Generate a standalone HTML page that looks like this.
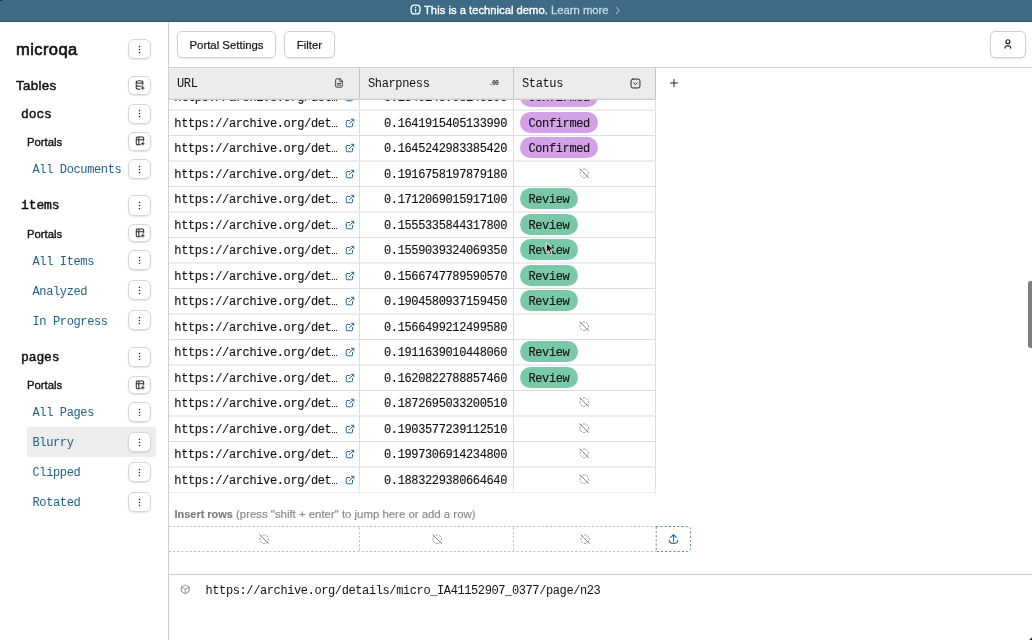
<!DOCTYPE html>
<html><head><meta charset="utf-8"><title>microqa</title>
<style>
*{box-sizing:border-box;margin:0;padding:0}
html,body{width:1032px;height:640px;overflow:hidden;background:#fff}
body{position:relative;font-family:"Liberation Sans",sans-serif;color:#111;font-size:11px}
.mono{font-family:"Liberation Mono",monospace}
#banner{position:absolute;left:0;top:0;width:1032px;height:22px;background:linear-gradient(#3d6b86 0 21px,#265a78 21px 22px);color:#fff;font-size:11.250px;line-height:20px;-webkit-text-stroke:.35px #fff}
#banner span{position:absolute;top:0;white-space:nowrap}
#banner svg{position:absolute;fill:none;stroke:#fff;stroke-width:2;stroke-linecap:round;stroke-linejoin:round}
#side{position:absolute;left:0;top:22px;width:169px;height:618px;border-right:1px solid #cfcfcf}
.si{position:absolute;white-space:nowrap;transform:translateY(-50%);line-height:1}
.bt{position:absolute;left:128px;width:23px;border:1px solid #d6d6d6;border-radius:6px;background:#fff;box-shadow:0 1px 1.5px rgba(0,0,0,.12)}
.ic{position:absolute;left:50%;top:50%;width:11px;height:11px;margin:-5.5px 0 0 -5.5px;fill:#222;stroke:#222;stroke-width:1.8;stroke-linecap:round;stroke-linejoin:round}
.ic2{position:absolute;left:50%;top:50%;width:12px;height:12px;margin:-6px 0 0 -6px;fill:none;stroke:#2a2a2a;stroke-width:1.020;stroke-linecap:round;stroke-linejoin:round}
.dots{position:absolute;left:50%;top:50%;width:3px;height:9px;margin:-4.5px 0 0 -1.5px;fill:#222}
.h1{left:16px;font-size:16.500px;-webkit-text-stroke:.62px #111;letter-spacing:.42px;margin-top:-.5px}
.h2{left:16px;font-size:13.300px;-webkit-text-stroke:.48px #111;letter-spacing:.32px;margin-top:.6px}
.tn{left:21px;font-family:"Liberation Mono",monospace;font-size:13px;-webkit-text-stroke:.45px #111;letter-spacing:-.1px;margin-top:.5px}
.pt{left:27px;font-size:11.300px;-webkit-text-stroke:.35px #111;margin-top:1.100px}
.ln{left:32.500px;font-family:"Liberation Mono",monospace;font-size:12px;letter-spacing:-.37px;color:#22628f;margin-top:1.900px}
#sel{position:absolute;left:27px;top:427px;width:129px;height:30px;background:#ededed;border-radius:3px}
#tool{position:absolute;left:169px;top:21px;width:863px;height:47px;border-bottom:1px solid #cfcfcf}
.tb{position:absolute;top:10px;height:26.500px;border:1px solid #d0d0d0;border-radius:5px;font-size:11.4px;line-height:26px;text-align:center;background:#fff;box-shadow:0 1px 1.5px rgba(0,0,0,.10);-webkit-text-stroke:.2px #111}
#hdr{position:absolute;left:169px;top:68px;width:487px;height:32px;background:linear-gradient(#ececec 0 30px,#e2e2e2 30px 31px,#cacaca 31px 32px);z-index:3}
#hdr div{position:absolute;top:0;height:30px;line-height:33.500px;font-family:"Liberation Mono",monospace;font-size:12px;letter-spacing:-.37px;border-right:1px solid #c4c4c4;padding-left:8px}
#hdr svg{position:absolute;top:10px;width:10px;height:10px;fill:none;stroke:#222;stroke-width:2;stroke-linecap:round;stroke-linejoin:round}
#grid{position:absolute;left:169px;top:0;width:487px;height:501px;overflow:hidden;z-index:1}
.hl{position:absolute;height:1px}
.row{position:absolute;left:0;width:487px;height:25.5px;font-family:"Liberation Mono",monospace;font-size:12px;letter-spacing:-.37px;line-height:29px;white-space:nowrap;-webkit-text-stroke:.12px #111}
.row>div{position:absolute;top:0;height:25.500px;border-right:1px solid #dcdcdc}
.c1{left:0;width:191px;padding-left:5.3px}
.c2{left:191px;width:154px;text-align:right;padding-right:6px}
.c3{left:345px;width:142px}
.u i{display:inline-block;width:5px;height:1.400px;margin-left:.9px;background:linear-gradient(90deg,#222 0 1.200px,transparent 1.200px 1.800px,#222 1.800px 3px,transparent 3px 3.600px,#222 3.600px 4.800px,transparent 4.800px)}
.lk{position:absolute;left:176.200px;top:8px;width:10px;height:10px;fill:none;stroke:#2a6899;stroke-width:2.400;stroke-linecap:round;stroke-linejoin:round}
.nul{position:absolute;width:10.400px;height:10.400px;fill:none;stroke:#808080;stroke-width:2.200;stroke-linecap:round;stroke-linejoin:round}
.c3 .nul{left:65.2px;top:6.800px}
.dc .nul{left:50%;top:7.5px;margin-left:-5px}
.tag{position:absolute;left:6px;top:1.6px;height:21.500px;line-height:25.500px;border-radius:10.750px;padding:0 8.600px 0 8.400px}
.tag.c{background:#d4a1e8}
.tag.r{background:#79c9a8}
#fade{position:absolute;left:169px;top:485px;width:500px;height:17px;background:linear-gradient(rgba(255,255,255,0),rgba(255,255,255,.6) 45%,#fff 85%);z-index:2}
#ins{position:absolute;left:174.500px;top:508px;font-size:11.400px;color:#868686;-webkit-text-stroke:.15px #868686;white-space:nowrap;line-height:13px}
#ins b{color:#7a7a7a;font-size:10.950px}
.dh{position:absolute;height:1px;background:repeating-linear-gradient(90deg,#b4b4b4 0 2.100px,transparent 2.100px 4.200px)}
.dv{position:absolute;width:1px;background:repeating-linear-gradient(180deg,#b4b4b4 0 2.100px,transparent 2.100px 4.200px)}
#bot{position:absolute;left:169px;top:574px;width:863px;height:66px;border-top:1px solid #cfcfcf}
#thumb{position:absolute;left:1028px;top:281px;width:5px;height:67px;background:#7f7f7f;border-radius:2.5px 0 0 2.5px;z-index:9}
#wrap{position:absolute;left:0;top:0;width:1032px;height:640px;will-change:transform}
</style></head><body><div id="wrap">
<div id="banner"><i style="position:absolute;left:0;top:0;width:1.500px;height:1px;background:#1a2340"></i>
<svg style="left:409.500px;top:4.250px;width:11px;height:11px" viewBox="0 0 11 11"><rect x="1.130" y="1.130" width="8.850" height="8.850" rx="3" stroke-width="1.250"/><path d="M5.600 5.100v2.700M5.600 3.400v.01" stroke-width="1.150"/></svg>
<span style="left:424px">This is a technical demo.</span><span style="left:551px;color:#c9dde9;-webkit-text-stroke:.3px #c9dde9">Learn more</span>
<svg style="left:613px;top:6px;width:9px;height:9px" viewBox="0 0 24 24"><path d="M9 4l8 8-8 8" stroke="#c9dde9" stroke-width="2.400"/></svg>
</div>
<div id="side">
</div>
<div id="sel"></div>
<div class="si h1" style="top:49.5px">microqa</div><div class="bt" style="top:39.3px;height:20.2px"><svg class="dots" viewBox="0 0 3 9"><circle cx="1.5" cy="1.4" r=".75"/><circle cx="1.5" cy="4.5" r=".75"/><circle cx="1.5" cy="7.6" r=".75"/></svg></div>
<div class="si h2" style="top:85.5px">Tables</div><div class="bt" style="top:76.4px;height:18.2px"><svg class="ic2" viewBox="0 0 12 12"><ellipse cx="5.500" cy="3" rx="3.300" ry="1.300"/><path d="M2.200 3V8.900c0 .7 1.400 1.300 3.300 1.300h.4M2.200 5.950c0 .7 1.400 1.300 3.300 1.300.6 0 1.200-.05 1.700-.15M8.800 3V6M7.300 8.900h2.800M8.700 7.500v2.800"/></svg></div>
<div class="si tn" style="top:113.5px">docs</div><div class="bt" style="top:103.7px;height:20.2px"><svg class="dots" viewBox="0 0 3 9"><circle cx="1.5" cy="1.4" r=".75"/><circle cx="1.5" cy="4.5" r=".75"/><circle cx="1.5" cy="7.6" r=".75"/></svg></div>
<div class="si pt" style="top:142px">Portals</div><div class="bt" style="top:132.4px;height:18.2px"><svg class="ic2" viewBox="0 0 12 12"><path d="M6.500 9.700H3.450a1.200 1.200 0 0 1-1.200-1.200V3.100a1.200 1.200 0 0 1 1.200-1.200h5.050a1.200 1.200 0 0 1 1.200 1.200V6M2.250 4.800H9.700M4.800 1.900V9.700M7.400 8.700h2.800M8.800 7.300v2.800"/></svg></div>
<div class="si ln" style="top:168.5px">All Documents</div><div class="bt" style="top:159.0px;height:20.2px"><svg class="dots" viewBox="0 0 3 9"><circle cx="1.5" cy="1.4" r=".75"/><circle cx="1.5" cy="4.5" r=".75"/><circle cx="1.5" cy="7.6" r=".75"/></svg></div>
<div class="si tn" style="top:204.4px">items</div><div class="bt" style="top:195.4px;height:20.2px"><svg class="dots" viewBox="0 0 3 9"><circle cx="1.5" cy="1.4" r=".75"/><circle cx="1.5" cy="4.5" r=".75"/><circle cx="1.5" cy="7.6" r=".75"/></svg></div>
<div class="si pt" style="top:233.5px">Portals</div><div class="bt" style="top:224.1px;height:18.2px"><svg class="ic2" viewBox="0 0 12 12"><path d="M6.500 9.700H3.450a1.200 1.200 0 0 1-1.200-1.200V3.100a1.200 1.200 0 0 1 1.200-1.200h5.050a1.200 1.200 0 0 1 1.200 1.200V6M2.250 4.800H9.700M4.800 1.900V9.700M7.400 8.700h2.800M8.800 7.300v2.800"/></svg></div>
<div class="si ln" style="top:260px">All Items</div><div class="bt" style="top:250.3px;height:20.2px"><svg class="dots" viewBox="0 0 3 9"><circle cx="1.5" cy="1.4" r=".75"/><circle cx="1.5" cy="4.5" r=".75"/><circle cx="1.5" cy="7.6" r=".75"/></svg></div>
<div class="si ln" style="top:290px">Analyzed</div><div class="bt" style="top:280.3px;height:20.2px"><svg class="dots" viewBox="0 0 3 9"><circle cx="1.5" cy="1.4" r=".75"/><circle cx="1.5" cy="4.5" r=".75"/><circle cx="1.5" cy="7.6" r=".75"/></svg></div>
<div class="si ln" style="top:320px">In Progress</div><div class="bt" style="top:310.3px;height:20.2px"><svg class="dots" viewBox="0 0 3 9"><circle cx="1.5" cy="1.4" r=".75"/><circle cx="1.5" cy="4.5" r=".75"/><circle cx="1.5" cy="7.6" r=".75"/></svg></div>
<div class="si tn" style="top:356.5px">pages</div><div class="bt" style="top:346.75px;height:20.2px"><svg class="dots" viewBox="0 0 3 9"><circle cx="1.5" cy="1.4" r=".75"/><circle cx="1.5" cy="4.5" r=".75"/><circle cx="1.5" cy="7.6" r=".75"/></svg></div>
<div class="si pt" style="top:385px">Portals</div><div class="bt" style="top:375.7px;height:18.2px"><svg class="ic2" viewBox="0 0 12 12"><path d="M6.500 9.700H3.450a1.200 1.200 0 0 1-1.200-1.200V3.100a1.200 1.200 0 0 1 1.200-1.200h5.050a1.200 1.200 0 0 1 1.200 1.200V6M2.250 4.800H9.700M4.800 1.900V9.700M7.400 8.700h2.800M8.800 7.300v2.800"/></svg></div>
<div class="si ln" style="top:411.5px">All Pages</div><div class="bt" style="top:402.25px;height:20.2px"><svg class="dots" viewBox="0 0 3 9"><circle cx="1.5" cy="1.4" r=".75"/><circle cx="1.5" cy="4.5" r=".75"/><circle cx="1.5" cy="7.6" r=".75"/></svg></div>
<div class="si ln" style="top:441.5px">Blurry</div><div class="bt" style="top:432.25px;height:20.2px"><svg class="dots" viewBox="0 0 3 9"><circle cx="1.5" cy="1.4" r=".75"/><circle cx="1.5" cy="4.5" r=".75"/><circle cx="1.5" cy="7.6" r=".75"/></svg></div>
<div class="si ln" style="top:471.5px">Clipped</div><div class="bt" style="top:462.25px;height:20.2px"><svg class="dots" viewBox="0 0 3 9"><circle cx="1.5" cy="1.4" r=".75"/><circle cx="1.5" cy="4.5" r=".75"/><circle cx="1.5" cy="7.6" r=".75"/></svg></div>
<div class="si ln" style="top:501.5px">Rotated</div><div class="bt" style="top:492.25px;height:20.2px"><svg class="dots" viewBox="0 0 3 9"><circle cx="1.5" cy="1.4" r=".75"/><circle cx="1.5" cy="4.5" r=".75"/><circle cx="1.5" cy="7.6" r=".75"/></svg></div>
<div id="tool">
<div class="tb" style="left:8px;width:99px">Portal Settings</div>
<div class="tb" style="left:115px;width:51px">Filter</div>
<div class="tb" style="left:821px;width:36px"><svg style="position:absolute;left:11px;top:6px;width:12px;height:12px;fill:none;stroke:#222;stroke-width:1.200;stroke-linecap:round" viewBox="0 0 12 12"><circle cx="5.900" cy="3.700" r="1.950"/><path d="M3.100 10.100V9.850a2 2 0 0 1 2-2h1.550a2 2 0 0 1 2 2v.25"/></svg></div>
</div>
<div id="grid">
<div class="hl" style="top:84px;left:0px;width:487px;background:rgb(222,222,222)"></div>
<div class="row" style="top:84px"><div class="c1"><span class="u">https://archive.org/det<i></i></span><svg class="lk" viewBox="0 0 24 24"><path d="M15 3h6v6M10 14 21 3M18 13v6a2 2 0 0 1-2 2H5a2 2 0 0 1-2-2V8a2 2 0 0 1 2-2h6"/></svg></div><div class="c2">0.1349145708148390</div><div class="c3"><span class="tag c">Confirmed</span></div></div>
<div class="hl" style="top:109px;left:0px;width:487px;background:rgb(238,238,238)"></div><div class="hl" style="top:110px;left:0px;width:487px;background:rgb(238,238,238)"></div>
<div class="row" style="top:110px"><div class="c1"><span class="u">https://archive.org/det<i></i></span><svg class="lk" viewBox="0 0 24 24"><path d="M15 3h6v6M10 14 21 3M18 13v6a2 2 0 0 1-2 2H5a2 2 0 0 1-2-2V8a2 2 0 0 1 2-2h6"/></svg></div><div class="c2">0.1641915405133990</div><div class="c3"><span class="tag c">Confirmed</span></div></div>
<div class="hl" style="top:135px;left:0px;width:487px;background:rgb(222,222,222)"></div>
<div class="row" style="top:135px"><div class="c1"><span class="u">https://archive.org/det<i></i></span><svg class="lk" viewBox="0 0 24 24"><path d="M15 3h6v6M10 14 21 3M18 13v6a2 2 0 0 1-2 2H5a2 2 0 0 1-2-2V8a2 2 0 0 1 2-2h6"/></svg></div><div class="c2">0.1645242983385420</div><div class="c3"><span class="tag c">Confirmed</span></div></div>
<div class="hl" style="top:160px;left:0px;width:487px;background:rgb(238,238,238)"></div><div class="hl" style="top:161px;left:0px;width:487px;background:rgb(238,238,238)"></div>
<div class="row" style="top:161px"><div class="c1"><span class="u">https://archive.org/det<i></i></span><svg class="lk" viewBox="0 0 24 24"><path d="M15 3h6v6M10 14 21 3M18 13v6a2 2 0 0 1-2 2H5a2 2 0 0 1-2-2V8a2 2 0 0 1 2-2h6"/></svg></div><div class="c2">0.1916758197879180</div><div class="c3"><svg class="nul" viewBox="0 0 24 24"><path stroke="#9c9c9c" d="M10.1 2.18a9.93 9.93 0 0 1 3.8 0M17.6 3.71a9.95 9.95 0 0 1 2.69 2.7M21.82 10.1a9.93 9.93 0 0 1 0 3.8M20.29 17.6a9.95 9.95 0 0 1-2.7 2.69M13.9 21.82a9.94 9.94 0 0 1-3.8 0M6.4 20.29a9.95 9.95 0 0 1-2.69-2.7M2.18 13.9a9.93 9.93 0 0 1 0-3.8M3.71 6.4a9.95 9.95 0 0 1 2.7-2.69"/><path d="M2 2l20 20"/></svg></div></div>
<div class="hl" style="top:186px;left:0px;width:487px;background:rgb(222,222,222)"></div>
<div class="row" style="top:186px"><div class="c1"><span class="u">https://archive.org/det<i></i></span><svg class="lk" viewBox="0 0 24 24"><path d="M15 3h6v6M10 14 21 3M18 13v6a2 2 0 0 1-2 2H5a2 2 0 0 1-2-2V8a2 2 0 0 1 2-2h6"/></svg></div><div class="c2">0.1712069015917100</div><div class="c3"><span class="tag r">Review</span></div></div>
<div class="hl" style="top:211px;left:0px;width:487px;background:rgb(238,238,238)"></div><div class="hl" style="top:212px;left:0px;width:487px;background:rgb(238,238,238)"></div>
<div class="row" style="top:212px"><div class="c1"><span class="u">https://archive.org/det<i></i></span><svg class="lk" viewBox="0 0 24 24"><path d="M15 3h6v6M10 14 21 3M18 13v6a2 2 0 0 1-2 2H5a2 2 0 0 1-2-2V8a2 2 0 0 1 2-2h6"/></svg></div><div class="c2">0.1555335844317800</div><div class="c3"><span class="tag r">Review</span></div></div>
<div class="hl" style="top:237px;left:0px;width:487px;background:rgb(222,222,222)"></div>
<div class="row" style="top:237px"><div class="c1"><span class="u">https://archive.org/det<i></i></span><svg class="lk" viewBox="0 0 24 24"><path d="M15 3h6v6M10 14 21 3M18 13v6a2 2 0 0 1-2 2H5a2 2 0 0 1-2-2V8a2 2 0 0 1 2-2h6"/></svg></div><div class="c2">0.1559039324069350</div><div class="c3"><span class="tag r">Review</span></div></div>
<div class="hl" style="top:262px;left:0px;width:487px;background:rgb(238,238,238)"></div><div class="hl" style="top:263px;left:0px;width:487px;background:rgb(238,238,238)"></div>
<div class="row" style="top:263px"><div class="c1"><span class="u">https://archive.org/det<i></i></span><svg class="lk" viewBox="0 0 24 24"><path d="M15 3h6v6M10 14 21 3M18 13v6a2 2 0 0 1-2 2H5a2 2 0 0 1-2-2V8a2 2 0 0 1 2-2h6"/></svg></div><div class="c2">0.1566747789590570</div><div class="c3"><span class="tag r">Review</span></div></div>
<div class="hl" style="top:288px;left:0px;width:487px;background:rgb(222,222,222)"></div>
<div class="row" style="top:288px"><div class="c1"><span class="u">https://archive.org/det<i></i></span><svg class="lk" viewBox="0 0 24 24"><path d="M15 3h6v6M10 14 21 3M18 13v6a2 2 0 0 1-2 2H5a2 2 0 0 1-2-2V8a2 2 0 0 1 2-2h6"/></svg></div><div class="c2">0.1904580937159450</div><div class="c3"><span class="tag r">Review</span></div></div>
<div class="hl" style="top:313px;left:0px;width:487px;background:rgb(238,238,238)"></div><div class="hl" style="top:314px;left:0px;width:487px;background:rgb(238,238,238)"></div>
<div class="row" style="top:314px"><div class="c1"><span class="u">https://archive.org/det<i></i></span><svg class="lk" viewBox="0 0 24 24"><path d="M15 3h6v6M10 14 21 3M18 13v6a2 2 0 0 1-2 2H5a2 2 0 0 1-2-2V8a2 2 0 0 1 2-2h6"/></svg></div><div class="c2">0.1566499212499580</div><div class="c3"><svg class="nul" viewBox="0 0 24 24"><path stroke="#9c9c9c" d="M10.1 2.18a9.93 9.93 0 0 1 3.8 0M17.6 3.71a9.95 9.95 0 0 1 2.69 2.7M21.82 10.1a9.93 9.93 0 0 1 0 3.8M20.29 17.6a9.95 9.95 0 0 1-2.7 2.69M13.9 21.82a9.94 9.94 0 0 1-3.8 0M6.4 20.29a9.95 9.95 0 0 1-2.69-2.7M2.18 13.9a9.93 9.93 0 0 1 0-3.8M3.71 6.4a9.95 9.95 0 0 1 2.7-2.69"/><path d="M2 2l20 20"/></svg></div></div>
<div class="hl" style="top:339px;left:0px;width:487px;background:rgb(222,222,222)"></div>
<div class="row" style="top:339px"><div class="c1"><span class="u">https://archive.org/det<i></i></span><svg class="lk" viewBox="0 0 24 24"><path d="M15 3h6v6M10 14 21 3M18 13v6a2 2 0 0 1-2 2H5a2 2 0 0 1-2-2V8a2 2 0 0 1 2-2h6"/></svg></div><div class="c2">0.1911639010448060</div><div class="c3"><span class="tag r">Review</span></div></div>
<div class="hl" style="top:364px;left:0px;width:487px;background:rgb(238,238,238)"></div><div class="hl" style="top:365px;left:0px;width:487px;background:rgb(238,238,238)"></div>
<div class="row" style="top:365px"><div class="c1"><span class="u">https://archive.org/det<i></i></span><svg class="lk" viewBox="0 0 24 24"><path d="M15 3h6v6M10 14 21 3M18 13v6a2 2 0 0 1-2 2H5a2 2 0 0 1-2-2V8a2 2 0 0 1 2-2h6"/></svg></div><div class="c2">0.1620822788857460</div><div class="c3"><span class="tag r">Review</span></div></div>
<div class="hl" style="top:390px;left:0px;width:487px;background:rgb(222,222,222)"></div>
<div class="row" style="top:390px"><div class="c1"><span class="u">https://archive.org/det<i></i></span><svg class="lk" viewBox="0 0 24 24"><path d="M15 3h6v6M10 14 21 3M18 13v6a2 2 0 0 1-2 2H5a2 2 0 0 1-2-2V8a2 2 0 0 1 2-2h6"/></svg></div><div class="c2">0.1872695033200510</div><div class="c3"><svg class="nul" viewBox="0 0 24 24"><path stroke="#9c9c9c" d="M10.1 2.18a9.93 9.93 0 0 1 3.8 0M17.6 3.71a9.95 9.95 0 0 1 2.69 2.7M21.82 10.1a9.93 9.93 0 0 1 0 3.8M20.29 17.6a9.95 9.95 0 0 1-2.7 2.69M13.9 21.82a9.94 9.94 0 0 1-3.8 0M6.4 20.29a9.95 9.95 0 0 1-2.69-2.7M2.18 13.9a9.93 9.93 0 0 1 0-3.8M3.71 6.4a9.95 9.95 0 0 1 2.7-2.69"/><path d="M2 2l20 20"/></svg></div></div>
<div class="hl" style="top:415px;left:0px;width:487px;background:rgb(238,238,238)"></div><div class="hl" style="top:416px;left:0px;width:487px;background:rgb(238,238,238)"></div>
<div class="row" style="top:416px"><div class="c1"><span class="u">https://archive.org/det<i></i></span><svg class="lk" viewBox="0 0 24 24"><path d="M15 3h6v6M10 14 21 3M18 13v6a2 2 0 0 1-2 2H5a2 2 0 0 1-2-2V8a2 2 0 0 1 2-2h6"/></svg></div><div class="c2">0.1903577239112510</div><div class="c3"><svg class="nul" viewBox="0 0 24 24"><path stroke="#9c9c9c" d="M10.1 2.18a9.93 9.93 0 0 1 3.8 0M17.6 3.71a9.95 9.95 0 0 1 2.69 2.7M21.82 10.1a9.93 9.93 0 0 1 0 3.8M20.29 17.6a9.95 9.95 0 0 1-2.7 2.69M13.9 21.82a9.94 9.94 0 0 1-3.8 0M6.4 20.29a9.95 9.95 0 0 1-2.69-2.7M2.18 13.9a9.93 9.93 0 0 1 0-3.8M3.71 6.4a9.95 9.95 0 0 1 2.7-2.69"/><path d="M2 2l20 20"/></svg></div></div>
<div class="hl" style="top:441px;left:0px;width:487px;background:rgb(222,222,222)"></div>
<div class="row" style="top:441px"><div class="c1"><span class="u">https://archive.org/det<i></i></span><svg class="lk" viewBox="0 0 24 24"><path d="M15 3h6v6M10 14 21 3M18 13v6a2 2 0 0 1-2 2H5a2 2 0 0 1-2-2V8a2 2 0 0 1 2-2h6"/></svg></div><div class="c2">0.1997306914234800</div><div class="c3"><svg class="nul" viewBox="0 0 24 24"><path stroke="#9c9c9c" d="M10.1 2.18a9.93 9.93 0 0 1 3.8 0M17.6 3.71a9.95 9.95 0 0 1 2.69 2.7M21.82 10.1a9.93 9.93 0 0 1 0 3.8M20.29 17.6a9.95 9.95 0 0 1-2.7 2.69M13.9 21.82a9.94 9.94 0 0 1-3.8 0M6.4 20.29a9.95 9.95 0 0 1-2.69-2.7M2.18 13.9a9.93 9.93 0 0 1 0-3.8M3.71 6.4a9.95 9.95 0 0 1 2.7-2.69"/><path d="M2 2l20 20"/></svg></div></div>
<div class="hl" style="top:466px;left:0px;width:487px;background:rgb(238,238,238)"></div><div class="hl" style="top:467px;left:0px;width:487px;background:rgb(238,238,238)"></div>
<div class="row" style="top:467px"><div class="c1"><span class="u">https://archive.org/det<i></i></span><svg class="lk" viewBox="0 0 24 24"><path d="M15 3h6v6M10 14 21 3M18 13v6a2 2 0 0 1-2 2H5a2 2 0 0 1-2-2V8a2 2 0 0 1 2-2h6"/></svg></div><div class="c2">0.1883229380664640</div><div class="c3"><svg class="nul" viewBox="0 0 24 24"><path stroke="#9c9c9c" d="M10.1 2.18a9.93 9.93 0 0 1 3.8 0M17.6 3.71a9.95 9.95 0 0 1 2.69 2.7M21.82 10.1a9.93 9.93 0 0 1 0 3.8M20.29 17.6a9.95 9.95 0 0 1-2.7 2.69M13.9 21.82a9.94 9.94 0 0 1-3.8 0M6.4 20.29a9.95 9.95 0 0 1-2.69-2.7M2.18 13.9a9.93 9.93 0 0 1 0-3.8M3.71 6.4a9.95 9.95 0 0 1 2.7-2.69"/><path d="M2 2l20 20"/></svg></div></div>
<div class="hl" style="top:492px;left:0px;width:487px;background:rgb(222,222,222)"></div>
<div class="row" style="top:492px"><div class="c1"><span class="u">https://archive.org/det<i></i></span><svg class="lk" viewBox="0 0 24 24"><path d="M15 3h6v6M10 14 21 3M18 13v6a2 2 0 0 1-2 2H5a2 2 0 0 1-2-2V8a2 2 0 0 1 2-2h6"/></svg></div><div class="c2">0.1700000000000000</div><div class="c3"><svg class="nul" viewBox="0 0 24 24"><path stroke="#9c9c9c" d="M10.1 2.18a9.93 9.93 0 0 1 3.8 0M17.6 3.71a9.95 9.95 0 0 1 2.69 2.7M21.82 10.1a9.93 9.93 0 0 1 0 3.8M20.29 17.6a9.95 9.95 0 0 1-2.7 2.69M13.9 21.82a9.94 9.94 0 0 1-3.8 0M6.4 20.29a9.95 9.95 0 0 1-2.69-2.7M2.18 13.9a9.93 9.93 0 0 1 0-3.8M3.71 6.4a9.95 9.95 0 0 1 2.7-2.69"/><path d="M2 2l20 20"/></svg></div></div>
</div>
<div id="hdr">
<div style="left:0;width:191px">URL<svg style="left:165px" viewBox="0 0 24 24"><path d="M14 2H6a2 2 0 0 0-2 2v16a2 2 0 0 0 2 2h12a2 2 0 0 0 2-2V8zM14 2v6h6M8 13h8M8 17h8"/></svg></div>
<div style="left:191px;width:154px">Sharpness<span style="position:absolute;left:129px;top:0;font-size:6.500px;font-weight:bold;letter-spacing:-.9px;color:#333;line-height:31px">.00</span></div>
<div style="left:345px;width:142px">Status<svg style="left:116px;top:9.700px;width:11px;height:11px;stroke-width:1" viewBox="0 0 11 11"><rect x="1.050" y="1.050" width="8.900" height="8.900" rx="1.800"/><path d="M3.700 4.800l1.800 1.800 1.800-1.800"/></svg></div>
</div>
<svg style="position:absolute;left:668.500px;top:78.100px;width:10px;height:10px" viewBox="0 0 24 24"><path d="M12 3.200v17.600M3.200 12h17.600" stroke="#222" stroke-width="2.300" stroke-linecap="round"/></svg>
<div id="fade"></div>
<div id="ins"><b>Insert rows</b> (press "shift + enter" to jump here or add a row)</div>
<svg style="position:absolute;left:169px;top:526px;width:487px;height:26px" viewBox="0 0 487 26" fill="none" stroke="#bcbcbc" stroke-width="1" stroke-dasharray="2.100 2.090"><path d="M-.2 .5H487M-.2 25.500H487M190.500 1.500V25M344.500 1.500V25"/></svg>
<svg class="nul" style="left:259px;top:533.800px" viewBox="0 0 24 24"><path stroke="#9c9c9c" d="M10.1 2.18a9.93 9.93 0 0 1 3.8 0M17.6 3.71a9.95 9.95 0 0 1 2.69 2.7M21.82 10.1a9.93 9.93 0 0 1 0 3.8M20.29 17.6a9.95 9.95 0 0 1-2.7 2.69M13.9 21.82a9.94 9.94 0 0 1-3.8 0M6.4 20.29a9.95 9.95 0 0 1-2.69-2.7M2.18 13.9a9.93 9.93 0 0 1 0-3.8M3.71 6.4a9.95 9.95 0 0 1 2.7-2.69"/><path d="M2 2l20 20"/></svg>
<svg class="nul" style="left:431.500px;top:533.800px" viewBox="0 0 24 24"><path stroke="#9c9c9c" d="M10.1 2.18a9.93 9.93 0 0 1 3.8 0M17.6 3.71a9.95 9.95 0 0 1 2.69 2.7M21.82 10.1a9.93 9.93 0 0 1 0 3.8M20.29 17.6a9.95 9.95 0 0 1-2.7 2.69M13.9 21.82a9.94 9.94 0 0 1-3.8 0M6.4 20.29a9.95 9.95 0 0 1-2.69-2.7M2.18 13.9a9.93 9.93 0 0 1 0-3.8M3.71 6.4a9.95 9.95 0 0 1 2.7-2.69"/><path d="M2 2l20 20"/></svg>
<svg class="nul" style="left:579.700px;top:533.800px" viewBox="0 0 24 24"><path stroke="#9c9c9c" d="M10.1 2.18a9.93 9.93 0 0 1 3.8 0M17.6 3.71a9.95 9.95 0 0 1 2.69 2.7M21.82 10.1a9.93 9.93 0 0 1 0 3.8M20.29 17.6a9.95 9.95 0 0 1-2.7 2.69M13.9 21.82a9.94 9.94 0 0 1-3.8 0M6.4 20.29a9.95 9.95 0 0 1-2.69-2.7M2.18 13.9a9.93 9.93 0 0 1 0-3.8M3.71 6.4a9.95 9.95 0 0 1 2.7-2.69"/><path d="M2 2l20 20"/></svg>
<svg style="position:absolute;left:655px;top:526px;width:37px;height:26px" viewBox="0 0 37 26"><path d="M1.200 .5H32.500a3 3 0 0 1 3 3v19a3 3 0 0 1-3 3H1.200z" fill="#fff" stroke="#6189ad" stroke-width="1" stroke-dasharray="2.100 2.100"/><path d="M18.500 15.300V9M15.700 11.400l2.800-2.800 2.800 2.800M14.300 14.300c.1 2.300 .9 3.100 4.200 3.100s4.100-.8 4.200-3.100" fill="none" stroke="#2f6a96" stroke-width="1.150" stroke-linecap="round" stroke-linejoin="round"/></svg>
<div id="bot">
<svg style="position:absolute;left:11px;top:9.100px;width:10.500px;height:10.500px;fill:none;stroke:#777;stroke-width:1.800;stroke-linejoin:round" viewBox="0 0 24 24"><path d="M12 2l9 5v10l-9 5-9-5V7zM3 7l9 5 9-5M12 12v10"/></svg>
<div class="mono" style="position:absolute;left:36.500px;top:8.500px;font-size:12px;letter-spacing:-.392px;line-height:14px;white-space:nowrap">https://archive.org/details/micro_IA41152907_0377/page/n23</div>
</div>
<div id="thumb"></div>
<svg style="position:absolute;left:1028px;top:636px;width:4px;height:4px" viewBox="0 0 4 4"><path d="M4 1.200V4H1.200z" fill="#222"/></svg>
<svg style="position:absolute;left:545.200px;top:241.900px;width:10.400px;height:13.900px;z-index:10" viewBox="0 0 12 16"><path d="M1.500 1v11.500l2.800-2.600 2 4.600 1.900-.8-2-4.500h3.800z" fill="#111" stroke="#fff" stroke-width="1" stroke-linejoin="round"/></svg>
</div></body></html>
